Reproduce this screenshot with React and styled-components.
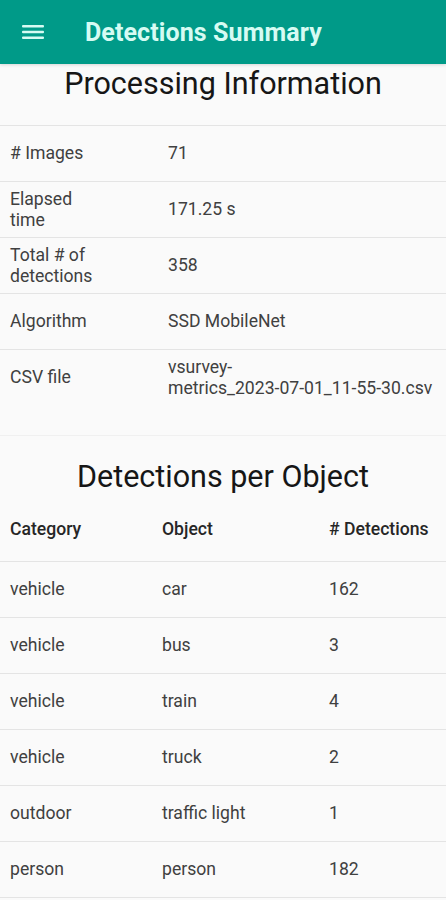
import styled, { createGlobalStyle } from "styled-components";

const GlobalStyle = createGlobalStyle`
  html, body {
    margin: 0;
    padding: 0;
    background: #fafafa;
  }
  body {
    font-family: Roboto, "Noto Sans", "Liberation Sans", sans-serif;
    color: #3c3c3c;
  }
`;

const Page = styled.div`
  width: 446px;
  min-height: 900px;
  background: #fafafa;
  overflow: hidden;
`;

const AppBar = styled.header`
  height: 64px;
  background: #009a88;
  display: flex;
  align-items: center;
  padding-left: 22px;
  gap: 41px;
  box-shadow: 0 1px 3px rgba(0, 0, 0, 0.15);
`;

const MenuIcon = styled.svg`
  width: 22px;
  height: 16px;
  display: block;
`;

const AppTitle = styled.h1`
  margin: 0;
  font-size: 25px;
  font-weight: 700;
  color: #d6fbf3;
  letter-spacing: 0.1px;
`;

const Section = styled.section`
  border-bottom: ${p => (p.$divider ? "1px solid #f0f0f0" : "none")};
  padding-bottom: ${p => p.$bottom || 0}px;
  padding-top: ${p => p.$top || 0}px;
`;

const SectionTitle = styled.h2`
  margin: 0;
  height: 40px;
  line-height: 40px;
  text-align: center;
  font-size: 30.5px;
  font-weight: 400;
  color: #161616;
`;

const Table = styled.div`
  display: grid;
  grid-template-columns: ${p => p.$cols};
  margin-top: ${p => p.$top || 0}px;
  border-top: ${p => (p.$topLine ? "1px solid #e4e4e4" : "none")};
`;

const Cell = styled.div`
  height: ${p => p.$h || 55}px;
  display: flex;
  align-items: center;
  padding-left: ${p => (p.$first ? 10 : 0)}px;
  padding-right: ${p => p.$padRight || 0}px;
  border-bottom: ${p => (p.$noLine ? "none" : "1px solid #e4e4e4")};
  font-size: 17.6px;
  line-height: 21px;
  color: #404040;
`;

const CellText = styled.span`
  display: block;
`;

const NoWrap = styled.span`
  white-space: nowrap;
`;

const HeadCell = styled(Cell)`
  font-weight: 500;
  color: #262626;
`;

const info = [
  ["# Images", "71"],
  ["Elapsed time", "171.25 s"],
  ["Total # of detections", "358"],
  ["Algorithm", "SSD MobileNet"],
  ["CSV file", <><NoWrap>vsurvey-</NoWrap> <NoWrap>metrics_2023-07-01_11-55-30.csv</NoWrap></>],
];

const detections = [
  ["vehicle", "car", "162"],
  ["vehicle", "bus", "3"],
  ["vehicle", "train", "4"],
  ["vehicle", "truck", "2"],
  ["outdoor", "traffic light", "1"],
  ["person", "person", "182"],
];

export default function App() {
  return (
    <Page>
      <GlobalStyle />
      <AppBar>
        <MenuIcon viewBox="0 0 22 16">
          <rect x="0" y="1" width="22" height="2.4" rx="1" fill="#d6fbf3" />
          <rect x="0" y="6.8" width="22" height="2.4" rx="1" fill="#d6fbf3" />
          <rect x="0" y="12.6" width="22" height="2.4" rx="1" fill="#d6fbf3" />
        </MenuIcon>
        <AppTitle>Detections Summary</AppTitle>
      </AppBar>

      <Section $divider $bottom={30}>
        <SectionTitle>Processing Information</SectionTitle>
        <Table $cols="168px 1fr" $top={21} $topLine>
          {info.map(([label, value], i) => {
            const last = i === info.length - 1;
            return [
              <Cell key={i + "l"} $first $padRight={70} $noLine={last}>
                <CellText>{label}</CellText>
              </Cell>,
              <Cell key={i + "v"} $noLine={last}>
                <CellText>{value}</CellText>
              </Cell>,
            ];
          })}
        </Table>
      </Section>

      <Section $top={21}>
        <SectionTitle>Detections per Object</SectionTitle>
        <Table $cols="162px 167px 1fr">
          <HeadCell $first $h={64}>Category</HeadCell>
          <HeadCell $h={64}>Object</HeadCell>
          <HeadCell $h={64}># Detections</HeadCell>
          {detections.map(([cat, obj, n], i) => [
            <Cell key={i + "c"} $first>{cat}</Cell>,
            <Cell key={i + "o"}>{obj}</Cell>,
            <Cell key={i + "n"}>{n}</Cell>,
          ])}
        </Table>
      </Section>
    </Page>
  );
}
